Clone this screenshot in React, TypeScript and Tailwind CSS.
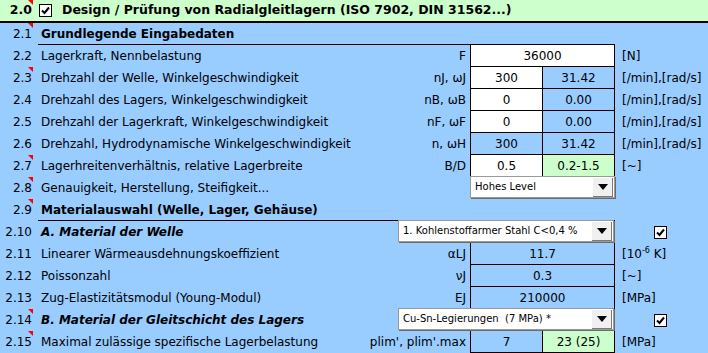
import React from "react";

type Cell = { t: string; bg?: string };

type Row = {
  n: string;
  tri?: boolean;
  kind: "sec" | "field" | "mat" | "select";
  label: string;
  sym?: string;
  vals?: Cell[];
  unit?: React.ReactNode;
  select?: string;
  check?: boolean;
};

const W = "bg-white";
const G = "bg-[#ccffcc]";
const B = "bg-transparent";

const rows: Row[] = [
  { n: "2.1", tri: true, kind: "sec", label: "Grundlegende Eingabedaten" },
  { n: "2.2", kind: "field", label: "Lagerkraft, Nennbelastung", sym: "F", vals: [{ t: "36000", bg: W }], unit: "[N]" },
  { n: "2.3", tri: true, kind: "field", label: "Drehzahl der Welle, Winkelgeschwindigkeit", sym: "nJ, ωJ", vals: [{ t: "300", bg: W }, { t: "31.42", bg: B }], unit: "[/min],[rad/s]" },
  { n: "2.4", kind: "field", label: "Drehzahl des Lagers, Winkelgeschwindigkeit", sym: "nB, ωB", vals: [{ t: "0", bg: W }, { t: "0.00", bg: B }], unit: "[/min],[rad/s]" },
  { n: "2.5", kind: "field", label: "Drehzahl der Lagerkraft, Winkelgeschwindigkeit", sym: "nF, ωF", vals: [{ t: "0", bg: W }, { t: "0.00", bg: B }], unit: "[/min],[rad/s]" },
  { n: "2.6", kind: "field", label: "Drehzahl, Hydrodynamische Winkelgeschwindigkeit", sym: "n, ωH", vals: [{ t: "300", bg: B }, { t: "31.42", bg: B }], unit: "[/min],[rad/s]" },
  { n: "2.7", tri: true, kind: "field", label: "Lagerhreitenverhältnis, relative Lagerbreite", sym: "B/D", vals: [{ t: "0.5", bg: W }, { t: "0.2-1.5", bg: G }], unit: "[~]" },
  { n: "2.8", tri: true, kind: "select", label: "Genauigkeit, Herstellung, Steifigkeit...", select: "Hohes Level" },
  { n: "2.9", tri: true, kind: "sec", label: "Materialauswahl (Welle, Lager, Gehäuse)" },
  { n: "2.10", kind: "mat", label: "A. Material der Welle", select: "1. Kohlenstoffarmer Stahl C<0,4 %", check: true },
  {
    n: "2.11",
    kind: "field",
    label: "Linearer Wärmeausdehnungskoeffizient",
    sym: "αLJ",
    vals: [{ t: "11.7", bg: B }],
    unit: (
      <span>
        [10<span className="text-[8px] relative -top-[5px]">-6</span> K]
      </span>
    ),
  },
  { n: "2.12", kind: "field", label: "Poissonzahl", sym: "νJ", vals: [{ t: "0.3", bg: B }], unit: "[~]" },
  { n: "2.13", kind: "field", label: "Zug-Elastizitätsmodul (Young-Modul)", sym: "EJ", vals: [{ t: "210000", bg: B }], unit: "[MPa]" },
  { n: "2.14", tri: true, kind: "mat", label: "B. Material der Gleitschicht des Lagers", select: "Cu-Sn-Legierungen  (7 MPa) *", check: true },
  { n: "2.15", tri: true, kind: "field", label: "Maximal zulässige spezifische Lagerbelastung", sym: "plim', plim'.max", vals: [{ t: "7", bg: B }, { t: "23 (25)", bg: G }], unit: "[MPa]" },
];

const Tri = () => (
  <span className="absolute top-0 right-0 w-0 h-0 border-t-[5px] border-l-[5px] border-t-[#ff0000] border-l-transparent" />
);

const Check = () => (
  <span className="w-[13px] h-[13px] bg-white border border-black flex items-center justify-center">
    <svg width="11" height="11" viewBox="0 0 11 11">
      <path d="M2 5.5 L4.5 8 L9 2.5" fill="none" stroke="black" strokeWidth="2" />
    </svg>
  </span>
);

const Select = ({ text, w }: { text: string; w: string }) => (
  <div className={`relative -top-px h-[22px] ${w} bg-white border border-[#9a9a9a] flex items-center shadow-[1px_1px_0_#6b6b6b]`}>
    <span className="flex-1 pl-[4px] text-[10px] whitespace-pre">{text}</span>
    <span className="w-[20px] h-[19px] mr-px bg-[#f0f0f0] border-r border-b border-[#7a7a7a] flex items-center justify-center">
      <svg width="10" height="6" viewBox="0 0 10 6">
        <path d="M0 0 H10 L5 6 Z" fill="black" />
      </svg>
    </span>
  </div>
);

const Values = ({ vals }: { vals: Cell[] }) =>
  vals.length === 1 ? (
    <div className={`w-[145px] h-full border-l border-r border-b border-black flex items-center justify-center ${vals[0].bg}`}>
      {vals[0].t}
    </div>
  ) : (
    <div className="w-[145px] h-full flex">
      <div className={`w-[73px] h-full border-l border-r border-b border-black flex items-center justify-center ${vals[0].bg}`}>
        {vals[0].t}
      </div>
      <div className={`w-[72px] h-full border-r border-b border-black flex items-center justify-center ${vals[1].bg}`}>
        {vals[1].t}
      </div>
    </div>
  );

const RowView = ({ r }: { r: Row }) => (
  <div className="flex h-[22px] items-center">
    <div className="relative w-[33px] h-full flex items-center justify-end pr-px">
      {r.tri && <Tri />}
      {r.n}
    </div>
    <div className="w-[5px]" />
    {r.kind === "sec" && (
      <div className="w-[577px] h-full border-b border-black flex items-center pl-[3px] font-bold">{r.label}</div>
    )}
    {r.kind === "field" && (
      <>
        <div className="w-[432px] h-full flex items-center justify-between pl-[3px] pr-[4px]">
          <span>{r.label}</span>
          <span>{r.sym}</span>
        </div>
        <Values vals={r.vals!} />
        <div className="flex-1 pl-[7px] whitespace-nowrap">{r.unit}</div>
      </>
    )}
    {r.kind === "select" && (
      <>
        <div className="w-[432px] h-full flex items-center pl-[3px]">{r.label}</div>
        <Select text={r.select!} w="w-[145px]" />
      </>
    )}
    {r.kind === "mat" && (
      <>
        <div className="w-[360px] h-full flex items-center pl-[3px] font-bold italic">{r.label}</div>
        <Select text={r.select!} w="w-[216px]" />
        <div className="flex-1 h-full flex items-center pl-[40px]">{r.check && <Check />}</div>
      </>
    )}
  </div>
);

export default function App() {
  return (
    <div className="w-[708px] h-[353px] overflow-hidden bg-[#99ccff] text-black text-[12px] font-['DejaVu_Sans',sans-serif] leading-none">
      <div className="h-[23px] bg-[#ccffcc] border-b-2 border-black flex items-center font-bold text-[12.5px]">
        <div className="relative w-[33px] h-full flex items-center justify-end pr-px">
          <Tri />
          2.0
        </div>
        <div className="ml-[6px]">
          <Check />
        </div>
        <div className="ml-[10px]">Design / Prüfung von Radialgleitlagern (ISO 7902, DIN 31562...)</div>
      </div>
      {rows.map((r) => (
        <RowView key={r.n} r={r} />
      ))}
    </div>
  );
}
